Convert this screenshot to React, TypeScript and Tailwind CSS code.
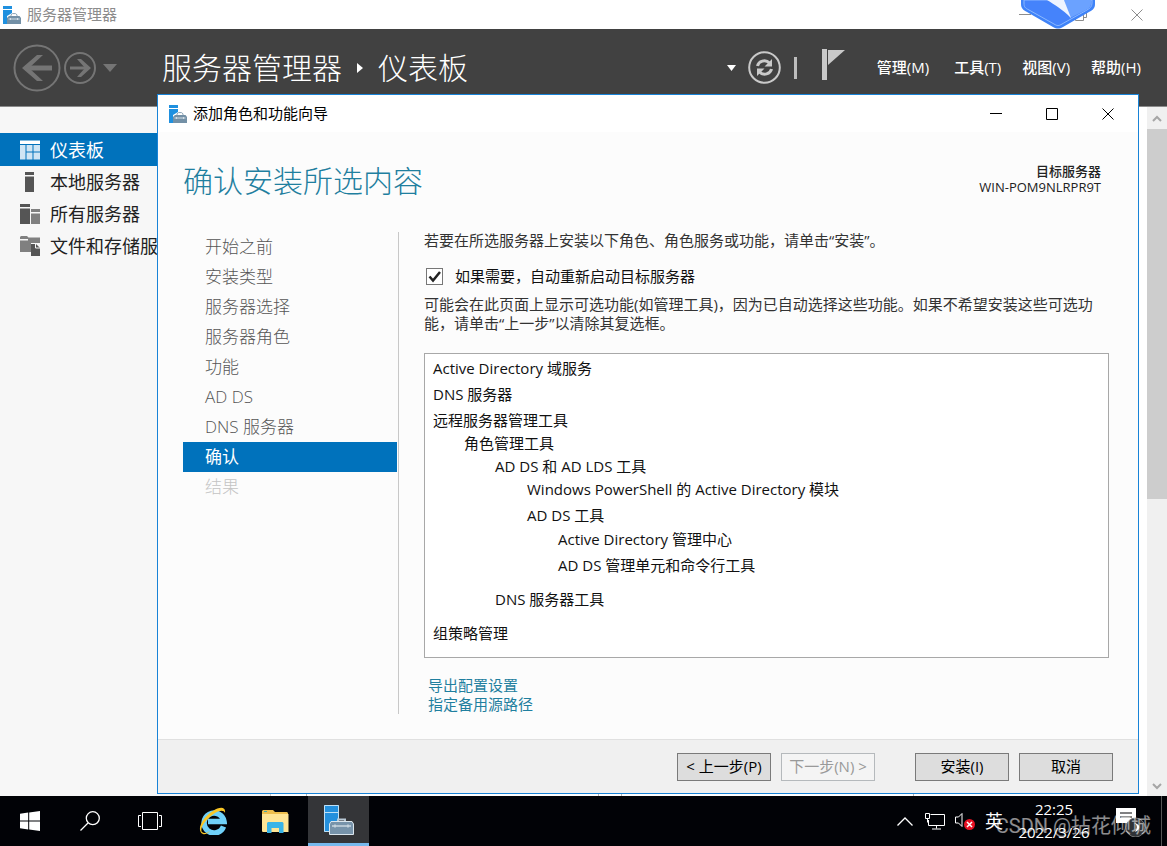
import React from "react";

type IconProps = { className?: string };

function ServerManagerIcon({ className }: IconProps) {
  return (
    <svg viewBox="0 0 30 30" className={className} aria-hidden="true">
      <path d="M0 0h15v27H0z" fill="#2490dd" />
      <path d="M.5.5h14v26H.5zM0 7.500h15" fill="none" stroke="#bfe0f6" strokeWidth="1" />
      <path d="M14 17v-2.500h7V17" fill="none" stroke="#b9c9d6" strokeWidth="2" />
      <path d="M7 16.500h21l1.500 2.500v10.500h-24V19z" fill="#7793aa" stroke="#dbe5ec" strokeWidth="1" />
      <path d="M8 21h19M11 19.500v3M24 19.500v3" stroke="#c9d6e0" strokeWidth="1.500" />
    </svg>
  );
}

function SmallServerIcon({ className }: IconProps) {
  return (
    <svg viewBox="0 0 18 18" className={className} aria-hidden="true">
      <path d="M0 0h9v3H0zM0 4h9v3L4 10v8H0z" fill="#1f90df" />
      <path d="M8 10V8.800l1.500-1.200h3L14 8.800V10" fill="none" stroke="#8ba3b5" strokeWidth="1" />
      <path d="M6 10h10.500L18 12v6H4v-6z" fill="#7390a6" />
      <path d="M5.500 13h11M7.500 12v2M14.500 12v2" stroke="#d2dde5" strokeWidth="1" />
    </svg>
  );
}

function DashboardIcon() {
  return (
    <svg viewBox="0 0 20 19" className="w-5 h-5" aria-hidden="true">
      <path d="M0 0h20v3.500H0z" fill="#fff" />
      <path d="M0 4.500h5.500V19H0zM6.500 4.500h6V11h-6zM13.500 4.500H20V11h-6.500zM6.500 12h6v7h-6zM13.500 12H20v7h-6.500z" fill="#cfe5f4" />
    </svg>
  );
}

function LocalServerIcon() {
  return (
    <svg viewBox="0 0 20 20" className="w-5 h-5" aria-hidden="true">
      <path d="M5 0h9v3H5zM5 4.500h9V20H5z" fill="#555" />
    </svg>
  );
}

function AllServersIcon() {
  return (
    <svg viewBox="0 0 20 20" className="w-5 h-5" aria-hidden="true">
      <path d="M0 0h10v3H0zM0 4.500h10V20H0z" fill="#555" />
      <path d="M11 5h9v3h-9zM11 9.500h9V20h-9z" fill="#808080" />
    </svg>
  );
}

function StorageIcon() {
  return (
    <svg viewBox="0 0 20 20" className="w-5 h-5" aria-hidden="true">
      <path d="M0 1l1-1h6l1.500 1.500H20V7h-9v9H0V4.500h8V3H0z" fill="#808080" />
      <path d="M11 8h5l4 4v8h-9z" fill="#555" />
      <path d="M15.500 7.500v4.500H20" fill="none" stroke="#f7f7f7" strokeWidth="1" />
    </svg>
  );
}

const minimizeShape = <path d="M0 5.500h12" />;
const maximizeShape = <path d="M.5.5h11v11H.5z" />;
const restoreShape = <path d="M.5 3.500h8v8h-8zM3.500 3.500v-3h8v8h-3" />;
const closeShape = <path d="M.5.5l11 11M11.500.5l-11 11" />;

function WindowButton({ label, children }: { label: string; children: React.ReactNode }) {
  return (
    <button aria-label={label} className="w-14 h-full flex items-center justify-center">
      <svg viewBox="0 0 12 12" className="w-3 h-3" fill="none" stroke="currentColor" strokeWidth="1">
        {children}
      </svg>
    </button>
  );
}

const sidebarItems = [
  { label: "仪表板", icon: DashboardIcon, style: "h-[33px] bg-[#0072bc] text-white" },
  { label: "本地服务器", icon: LocalServerIcon, style: "h-8" },
  { label: "所有服务器", icon: AllServersIcon, style: "h-8" },
  { label: "文件和存储服务", icon: StorageIcon, style: "h-8" },
];

const wizardSteps = [
  { label: "开始之前", style: "text-[#555]" },
  { label: "安装类型", style: "text-[#555]" },
  { label: "服务器选择", style: "text-[#555]" },
  { label: "服务器角色", style: "text-[#555]" },
  { label: "功能", style: "text-[#555]" },
  { label: "AD DS", style: "text-[#555]" },
  { label: "DNS 服务器", style: "text-[#555]" },
  { label: "确认", style: "bg-[#0072bc] text-white font-normal" },
  { label: "结果", style: "text-[#c4c4c4]" },
];

const selections = [
  { label: "Active Directory 域服务", style: "" },
  { label: "DNS 服务器", style: "mt-1.5" },
  { label: "远程服务器管理工具", style: "mt-1.5" },
  { label: "角色管理工具", style: "mt-[3px] pl-[31px]" },
  { label: "AD DS 和 AD LDS 工具", style: "mt-[3px] pl-[62px]" },
  { label: "Windows PowerShell 的 Active Directory 模块", style: "mt-[3px] pl-[94px]" },
  { label: "AD DS 工具", style: "mt-1.5 pl-[94px]" },
  { label: "Active Directory 管理中心", style: "mt-1 pl-[125px]" },
  { label: "AD DS 管理单元和命令行工具", style: "mt-1.5 pl-[125px]" },
  { label: "DNS 服务器工具", style: "mt-3.5 pl-[62px]" },
  { label: "组策略管理", style: "mt-3.5" },
];

function AppHeader() {
  return (
    <header className="h-[78px] shrink-0 bg-[#414141] border-b border-[#8a8a8a] flex items-center text-white pl-[13px] pr-[26px]">
      <button aria-label="后退">
        <svg viewBox="0 0 48 48" className="w-12 h-12" fill="none" stroke="#757575">
          <circle cx="24" cy="24" r="22.500" strokeWidth="2" />
          <path d="M39 24H12" strokeWidth="5" />
          <path d="M30 11h-6L9 24l15 13h6L16 24z" fill="#757575" stroke="none" />
        </svg>
      </button>
      <button aria-label="前进" className="ml-[3px]">
        <svg viewBox="0 0 32 32" className="w-8 h-8" fill="none" stroke="#757575">
          <circle cx="16" cy="16" r="15" strokeWidth="2" />
          <path d="M6 16h18" strokeWidth="3" />
          <path d="M13 7h4l10 9-10 9h-4l8-9z" fill="#757575" stroke="none" />
        </svg>
      </button>
      <button aria-label="历史记录" className="ml-[7px]">
        <svg viewBox="0 0 14 8" className="w-3.5 h-2">
          <path d="M0 0h14L7 8z" fill="#757575" />
        </svg>
      </button>
      <h1 className="ml-[45px] flex items-center text-3xl font-light whitespace-nowrap">
        服务器管理器
        <svg viewBox="0 0 6 10" className="w-1.5 h-2.5 mx-[15px]">
          <path d="M0 0l6 5-6 5z" fill="#fff" />
        </svg>
        仪表板
      </h1>

      <div className="ml-auto flex items-center">
        <button aria-label="通知列表">
          <svg viewBox="0 0 9 6" className="w-[9px] h-1.5">
            <path d="M0 0h9L4.500 6z" fill="#fff" />
          </svg>
        </button>
        <button aria-label="刷新" className="ml-3">
          <svg viewBox="0 0 33 33" className="w-[33px] h-[33px]" fill="none" stroke="#c9c9c9">
            <circle cx="16.500" cy="16.500" r="15.300" strokeWidth="2" />
            <path d="M9.500 15c1-5 8-7 12-3M23.500 18c-1 5-8 7-12 3" strokeWidth="3" />
            <path d="M24 8v7.500h-7.500zM9 25v-7.500h7.500z" fill="#c9c9c9" stroke="none" />
          </svg>
        </button>
        <span className="ml-[13px] w-[3px] h-[22px] bg-[#bdbdbd]" />
        <button aria-label="通知" className="ml-[25px] pb-1.5">
          <svg viewBox="0 0 23 31" className="w-[23px] h-[31px]" fill="#c9c9c9">
            <path d="M0 0h5v31H0zM6 1h17L6 16z" />
          </svg>
        </button>
        <nav className="ml-8 flex items-center gap-[21px] text-[15px] font-medium whitespace-nowrap">
          <button className="mr-1">管理(M)</button>
          <button>工具(T)</button>
          <button>视图(V)</button>
          <button>帮助(H)</button>
        </nav>
      </div>
    </header>
  );
}

function Wizard() {
  return (
    <section
      aria-label="添加角色和功能向导"
      className="absolute left-[157px] right-7 top-[94px] bottom-0.5 flex flex-col border border-[#1883d7] bg-[#fcfcfc]"
    >
      <div className="h-[37px] shrink-0 bg-white flex items-center pl-[11px] pr-0.5 text-[15px] text-black">
        <SmallServerIcon className="w-[18px] h-[18px]" />
        <span className="ml-1.5">添加角色和功能向导</span>
        <div className="ml-auto h-full flex">
          <WindowButton label="最小化">{minimizeShape}</WindowButton>
          <WindowButton label="最大化">{maximizeShape}</WindowButton>
          <WindowButton label="关闭">{closeShape}</WindowButton>
        </div>
      </div>

      <div className="flex justify-between pl-[25px] pr-[37px] pt-[31px]">
        <h2 className="text-3xl leading-9 font-light text-[#1f7f9f]">确认安装所选内容</h2>
        <div className="text-right text-[13px] leading-4 text-[#222]">
          <div className="font-medium">目标服务器</div>
          <div>WIN-POM9NLRPR9T</div>
        </div>
      </div>

      <div className="flex-1 min-h-0 flex pl-[25px] pr-[29px] pt-[33px] pb-[25px]">
        <ul className="w-[216px] shrink-0 border-r border-[#c8c8c8] pr-px text-[17px] font-light">
          {wizardSteps.map((step) => (
            <li key={step.label} className={`h-[30px] pl-[22px] flex items-center ${step.style}`}>
              {step.label}
            </li>
          ))}
        </ul>

        <div className="flex-1 min-w-0 pl-[25px] flex flex-col text-[15px] leading-5 text-[#333]">
          <p className="leading-4">若要在所选服务器上安装以下角色、角色服务或功能，请单击“安装”。</p>
          <div className="mt-[18px] flex items-center text-[#111]">
            <span className="relative ml-0.5 w-[17px] h-[17px]">
              <input
                id="restart"
                type="checkbox"
                defaultChecked
                className="peer block appearance-none w-full h-full border border-[#777] bg-white"
              />
              <svg
                viewBox="0 0 17 17"
                className="absolute inset-0 hidden peer-checked:block pointer-events-none"
                fill="none"
                stroke="#222"
                strokeWidth="2.500"
              >
                <path d="M3.500 8.500l3.500 4L14 4" />
              </svg>
            </span>
            <label htmlFor="restart" className="ml-3">
              如果需要，自动重新启动目标服务器
            </label>
          </div>
          <p className="mt-[9px] pr-3 leading-[19px]">
            可能会在此页面上显示可选功能(如管理工具)，因为已自动选择这些功能。如果不希望安装这些可选功能，请单击“上一步”以清除其复选框。
          </p>
          <ul className="mt-5 flex-1 min-h-0 border border-[#a8a8a8] bg-white px-2 pt-1 text-[#111] overflow-hidden">
            {selections.map((item) => (
              <li key={item.label} className={item.style}>
                {item.label}
              </li>
            ))}
          </ul>
          <div className="mt-[18px] pl-1 flex flex-col items-start leading-[19px] text-[#1f7f9f]">
            <a href="#export">导出配置设置</a>
            <a href="#source">指定备用源路径</a>
          </div>
        </div>
      </div>

      <footer className="h-[54px] shrink-0 border-t border-[#e0e0e0] bg-[#f0f0f0] flex items-center justify-end gap-2.5 pr-[25px] text-[15px] text-black">
        <button className="w-[94px] h-7 border border-[#7a7a7a] bg-[#ddd] whitespace-nowrap">&lt; 上一步(P)</button>
        <button disabled className="w-[94px] h-7 border border-[#b5b9bc] bg-[#f4f4f4] text-[#999] whitespace-nowrap">
          下一步(N) &gt;
        </button>
        <button className="ml-[30px] w-[94px] h-7 border border-[#7a7a7a] bg-[#ddd]">安装(I)</button>
        <button className="w-[94px] h-7 border border-[#7a7a7a] bg-[#ddd]">取消</button>
      </footer>
    </section>
  );
}

function Taskbar() {
  return (
    <div className="relative h-[50px] shrink-0 bg-[#010206] flex items-center text-white">
      <button aria-label="开始" className="w-15 h-full flex items-center justify-center">
        <svg viewBox="0 0 20 20" className="w-5 h-5" fill="#fff">
          <path d="M0 2.800L8.200 1.600v7.900H0zM9.200 1.500L20 0v9.500H9.200zM0 10.500h8.200v7.900L0 17.200zM9.200 10.500H20V20L9.200 18.500z" />
        </svg>
      </button>
      <button aria-label="搜索" className="w-15 h-full flex items-center justify-center">
        <svg viewBox="0 0 20 20" className="w-5 h-5" fill="none" stroke="#fff" strokeWidth="1.300">
          <circle cx="12.800" cy="7.200" r="6.500" />
          <path d="M8 12L.5 19.500" />
        </svg>
      </button>
      <button aria-label="任务视图" className="w-15 h-full flex items-center justify-center">
        <svg viewBox="0 0 24 18" className="w-6 h-[18px]" fill="none" stroke="#fff" strokeWidth="1">
          <path d="M4.500.5h15v17h-15zM3 3.500H.5v11H3M21 3.500h2.500v11H21" />
        </svg>
      </button>
      <button aria-label="Internet Explorer" className="ml-0.5 w-[62px] h-full flex items-center justify-center">
        <svg viewBox="0 0 28 28" className="w-7 h-7" fill="none">
          <path d="M24.500 19.500A10 10 0 1 1 25 14.500H9" stroke="#6fd0f8" strokeWidth="5.500" />
          <path d="M4 27C-4 23 5 9 14 4c6-4 13-5 12 2-1-3-5-3-10 0C8 11 0 21 3 25c2 2 5 1 8-1-2 2-5 4-7 3z" fill="#f9c626" />
        </svg>
      </button>
      <button aria-label="文件资源管理器" className="w-[62px] h-full flex items-center justify-center">
        <svg viewBox="0 0 27 23" className="w-[27px] h-[23px]">
          <path d="M0 1l1-1h10l2 2h12l1 1v18l-1 1H1l-1-1z" fill="#eebf4e" />
          <path d="M0 4h26.500v18H1l-1-1z" fill="#ffe595" />
          <path d="M2 1.500h3" stroke="#4ca9a0" />
          <path d="M5 23V13l1-1h14.500l1 1v10h-4.500v-5H9.500v5z" fill="#39b4e7" />
        </svg>
      </button>
      <button
        aria-label="服务器管理器"
        className="ml-0.5 w-[61px] h-full flex items-center justify-center bg-[#343538] border-b-[3px] border-[#76b9ed]"
      >
        <ServerManagerIcon className="w-[30px] h-[30px]" />
      </button>

      <div className="ml-auto h-full flex items-center">
        <button aria-label="显示隐藏的图标">
          <svg viewBox="0 0 16 9" className="w-4 h-[9px]" fill="none" stroke="#fff" strokeWidth="1.300">
            <path d="M.5 8.500L8 1l7.500 7.500" />
          </svg>
        </button>
        <button aria-label="网络" className="ml-3">
          <svg viewBox="0 0 20 17" className="w-5 h-[17px]" fill="none" stroke="#fff" strokeWidth="1">
            <path d="M5.500 1.500h14v11h-16V7M.5.500h4v5h-4zM2.500 5.500v4M11.500 12.500v3M7 16h9" />
          </svg>
        </button>
        <button aria-label="音量" className="ml-2.5">
          <svg viewBox="0 0 20 18" className="w-5 h-[18px]" fill="none">
            <path d="M.5 5h3L7 1.500v13L3.500 11h-3z" stroke="#fff" />
            <circle cx="14.500" cy="12.500" r="5.500" fill="#e81123" />
            <path d="M12 10l5 5M17 10l-5 5" stroke="#fff" strokeWidth="1.500" />
          </svg>
        </button>
        <span className="ml-2.5 text-lg">英</span>
        <div className="ml-2.5 w-[82px] text-center text-[15px] leading-[23px]">
          <div>22:25</div>
          <div>2022/3/26</div>
        </div>
        <button aria-label="通知中心" className="ml-[21px]">
          <svg viewBox="0 0 32 32" className="w-8 h-8">
            <path d="M0 3h20v15h-5v5l-5-5H0z" fill="#fff" />
            <path d="M4 8h12M4 12h12" stroke="#010206" strokeWidth="1" />
            <circle cx="19.500" cy="22.500" r="9.500" fill="#303236" stroke="#777" />
            <path d="M17 18c4 0 5 5 2 9 6-2 6-9-2-9z" fill="#fff" />
          </svg>
        </button>
        <span className="ml-[13px] mr-[5px] w-px h-full bg-[#555]" />
      </div>

      <span className="absolute right-4 bottom-1.5 font-['Roboto','Noto_Sans_CJK_SC',sans-serif] text-xl leading-7 text-white/55 whitespace-nowrap pointer-events-none">
        CSDN @拈花倾城
      </span>
    </div>
  );
}

export default function App() {
  return (
    <div
      lang="zh-CN"
      className="h-screen flex flex-col bg-white overflow-hidden font-['Open_Sans','Noto_Sans_CJK_SC',sans-serif]"
    >
      <div className="relative flex-1 min-h-0 flex flex-col">
        <div className="relative h-[29px] shrink-0 bg-white flex items-center pl-[3px] text-[15px] text-[#8c8c8c]">
          <SmallServerIcon className="w-[18px] h-[18px]" />
          <span className="ml-1.5">服务器管理器</span>
          <div className="ml-auto h-full flex pr-0.5">
            <WindowButton label="最小化">{minimizeShape}</WindowButton>
            <WindowButton label="还原">{restoreShape}</WindowButton>
            <WindowButton label="关闭">{closeShape}</WindowButton>
          </div>
          <svg viewBox="0 0 76 30" className="absolute right-[71px] top-0 w-[76px] h-[30px]" aria-hidden="true">
            <path d="M1 0h74v4c0 4-2 6-6 8L43 27c-4 2-6 2-10 0L7 12C3 10 1 8 1 4z" fill="#3f83f8" />
            <path d="M4 0h68v3c0 4-2 5-5 7L42 24c-3 2-5 2-8 0L9 10C5 8 4 7 4 3z" fill="#4583fb" stroke="#8bb8ff" />
            <path d="M44 0h27v3c0 4-2 5-5 7L50 18z" fill="#6ba2ff" />
            <path d="M27 0c8 5 15 9 24 18L44 0z" fill="#eef4ff" />
          </svg>
        </div>

        <AppHeader />

        <div className="flex-1 min-h-0 flex bg-[#f7f7f7]">
          <aside className="w-[271px] shrink-0 border-r border-[#c8c8c8] pt-[26px]">
            <nav className="flex flex-col text-lg text-[#222]">
              {sidebarItems.map((item) => (
                <a key={item.label} href="#" className={`pl-5 flex items-center gap-2.5 ${item.style}`}>
                  <item.icon />
                  {item.label}
                </a>
              ))}
            </nav>
          </aside>
          <main className="flex-1 bg-white pl-[35px] flex gap-[22px]">
            <div className="w-[293px] border-x border-[#b5b5b5]" />
            <div className="w-[293px] border-x border-[#b5b5b5]" />
          </main>
          <div className="w-5 bg-[#f0f0f0] flex flex-col items-center">
            <svg viewBox="0 0 20 22" className="w-5 h-[22px]" fill="none" stroke="#a6a6a6" strokeWidth="2">
              <path d="M6 14l4-4 4 4" />
            </svg>
            <div className="w-full h-[370px] bg-[#cdcdcd]" />
            <svg viewBox="0 0 20 22" className="mt-auto w-5 h-[22px]" fill="none" stroke="#a6a6a6" strokeWidth="2">
              <path d="M6 10l4 4 4-4" />
            </svg>
          </div>
        </div>

        <Wizard />
      </div>
      <Taskbar />
    </div>
  );
}
